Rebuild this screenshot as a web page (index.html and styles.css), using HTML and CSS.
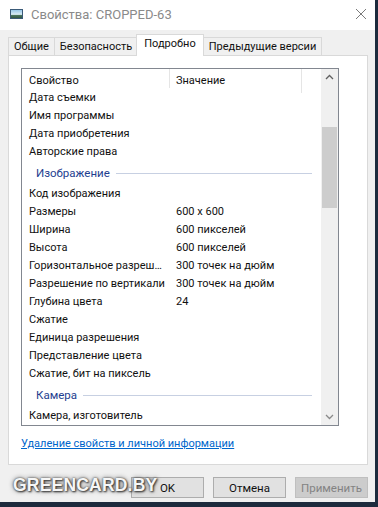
FILE: index.html
```html
<!DOCTYPE html>
<html lang="ru">
<head>
  <meta charset="UTF-8">
  <meta name="viewport" content="width=device-width, initial-scale=1.0">
  <title>Свойства: CROPPED-63</title>
  <link rel="stylesheet" href="styles.css">
</head>
<body>
  <div class="window">
    <div class="titlebar">
      <svg class="app-icon" width="13" height="10" viewBox="0 0 13 10">
        <defs>
          <linearGradient id="sky" x1="0" y1="0" x2="0" y2="1">
            <stop offset="0" stop-color="#8fc3e6"/>
            <stop offset="0.55" stop-color="#d9ecf6"/>
            <stop offset="0.6" stop-color="#4d7a63"/>
            <stop offset="1" stop-color="#2d4f3c"/>
          </linearGradient>
        </defs>
        <rect x="0.5" y="0.5" width="12" height="9" fill="url(#sky)" stroke="#3a5a78"/>
      </svg>
      <span class="title">Свойства: CROPPED-63</span>
      <svg class="close" width="12" height="12" viewBox="0 0 12 12">
        <path d="M1 1 L11 11 M11 1 L1 11" stroke="#7a7a7a" stroke-width="1"/>
      </svg>
    </div>

    <div class="tabs">
      <span class="tab">Общие</span>
      <span class="tab">Безопасность</span>
      <span class="tab active">Подробно</span>
      <span class="tab">Предыдущие версии</span>
    </div>

    <div class="panel">
      <div class="listbox">
        <div class="list">
          <div class="list-head">
            <span class="col-name">Свойство</span>
            <span class="col-value">Значение</span>
            <span class="col-rest"></span>
          </div>
          <div class="row"><span class="col-name">Дата съемки</span></div>
          <div class="row"><span class="col-name">Имя программы</span></div>
          <div class="row"><span class="col-name">Дата приобретения</span></div>
          <div class="row"><span class="col-name">Авторские права</span></div>
          <div class="group"><span>Изображение</span></div>
          <div class="row"><span class="col-name">Код изображения</span></div>
          <div class="row"><span class="col-name">Размеры</span><span class="col-value">600 x 600</span></div>
          <div class="row"><span class="col-name">Ширина</span><span class="col-value">600 пикселей</span></div>
          <div class="row"><span class="col-name">Высота</span><span class="col-value">600 пикселей</span></div>
          <div class="row"><span class="col-name">Горизонтальное разрешение</span><span class="col-value">300 точек на дюйм</span></div>
          <div class="row"><span class="col-name">Разрешение по вертикали</span><span class="col-value">300 точек на дюйм</span></div>
          <div class="row"><span class="col-name">Глубина цвета</span><span class="col-value">24</span></div>
          <div class="row"><span class="col-name">Сжатие</span></div>
          <div class="row"><span class="col-name">Единица разрешения</span></div>
          <div class="row"><span class="col-name">Представление цвета</span></div>
          <div class="row"><span class="col-name">Сжатие, бит на пиксель</span></div>
          <div class="group"><span>Камера</span></div>
          <div class="row"><span class="col-name">Камера, изготовитель</span></div>
        </div>
        <div class="scrollbar">
          <svg class="arrow" width="17" height="17" viewBox="0 0 17 17">
            <path d="M5 10 L8.5 6.5 L12 10" fill="none" stroke="#606060" stroke-width="1.3"/>
          </svg>
          <div class="track">
            <div class="thumb"></div>
          </div>
          <svg class="arrow" width="17" height="17" viewBox="0 0 17 17">
            <path d="M5 7 L8.5 10.5 L12 7" fill="none" stroke="#8a8a8a" stroke-width="1.3"/>
          </svg>
        </div>
      </div>
      <a href="#" class="link">Удаление свойств и личной информации</a>
    </div>

    <div class="buttons">
      <button type="button" class="btn">OK</button>
      <button type="button" class="btn">Отмена</button>
      <button type="button" class="btn" disabled>Применить</button>
    </div>

    <div class="watermark">GREENCARD.BY</div>
  </div>
</body>
</html>
```

FILE: styles.css
```css
* {
  margin: 0;
  padding: 0;
  box-sizing: border-box;
}
body {
  width: 378px;
  height: 507px;
  overflow: hidden;
  background: #1d2b3d;
  font-family: Roboto, "Liberation Sans", sans-serif;
  font-size: 11px;
  color: #111;
}
.window {
  position: relative;
  width: 375px;
  height: 502px;
  background: #f0f0f0;
  display: flex;
  flex-direction: column;
}
.titlebar {
  height: 30px;
  background: #fff;
  display: flex;
  align-items: center;
  padding: 0 8px 2px 10px;
}
.title {
  margin-left: 8px;
  color: #8a8a8a;
  font-size: 13px;
  flex: 1;
}
.tabs {
  margin-top: 4px;
  height: 21px;
  padding-left: 8px;
  display: flex;
  align-items: flex-end;
  position: relative;
  z-index: 1;
}
.tab {
  height: 18px;
  line-height: 17px;
  padding: 0 5px;
  border: 1px solid #d9d9d9;
  border-bottom: none;
  border-left: none;
  background: #f0f0f0;
}
.tab:first-child {
  border-left: 1px solid #d9d9d9;
}
.tab.active {
  height: 22px;
  line-height: 18px;
  margin: 0 -1px -1px -2px;
  padding: 0 7px;
  border-left: 1px solid #d9d9d9;
  background: #fff;
  position: relative;
}
.tab.active + .tab {
  margin-left: 1px;
}
.panel {
  margin: 0 7px 0 8px;
  height: 410px;
  border: 1px solid #d9d9d9;
  background: #fff;
  padding: 12px 0 0 12px;
  display: flex;
  flex-direction: column;
}
.listbox {
  width: 318px;
  height: 358px;
  border: 1px solid #828790;
  display: flex;
  overflow: hidden;
}
.list {
  flex: 1;
  overflow: hidden;
}
.list-head {
  height: 19px;
  display: flex;
  align-items: center;
  position: relative;
}
.list-head span {
  position: relative;
  height: 19px;
  line-height: 24px;
}
.list-head .col-value::after,
.list-head .col-name::after {
  content: "";
  position: absolute;
  right: 0;
  top: 0;
  width: 1px;
  height: 24px;
  background: #e5e5e5;
}
.col-name {
  width: 148px;
  flex-shrink: 0;
  padding-left: 7px;
  white-space: nowrap;
  overflow: hidden;
  text-overflow: ellipsis;
}
.col-value {
  width: 132px;
  flex-shrink: 0;
  padding-left: 6px;
  white-space: nowrap;
}
.row {
  height: 18px;
  line-height: 19px;
  display: flex;
}
.row .col-name {
  padding-right: 4px;
}
.group {
  height: 24px;
  display: flex;
  align-items: center;
  padding: 1px 0 0 14px;
  color: #1e3e8f;
  font-size: 11.5px;
}
.group::after {
  content: "";
  flex: 1;
  height: 1px;
  margin: 1px 9px 0 6px;
  background: #c7d0e2;
}
.scrollbar {
  width: 17px;
  background: #f0f0f0;
  display: flex;
  flex-direction: column;
}
.arrow {
  display: block;
  flex-shrink: 0;
}
.track {
  flex: 1;
  padding: 41px 1px 0;
}
.thumb {
  height: 81px;
  background: #cdcdcd;
}
.link {
  margin-top: 10px;
  align-self: flex-start;
  color: #0066cc;
  line-height: 16px;
  text-decoration: underline;
}
.buttons {
  margin-top: 12px;
  padding-right: 7px;
  display: flex;
  justify-content: flex-end;
  gap: 9px;
}
.btn {
  width: 73px;
  height: 21px;
  font-family: inherit;
  font-size: 11.5px;
  color: #111;
  background: #e1e1e1;
  border: 1px solid #adadad;
}
.btn:disabled {
  background: #cccccc;
  border-color: #bfbfbf;
  color: #838383;
}
.watermark {
  position: absolute;
  left: 13px;
  top: 475px;
  font-family: "Liberation Sans", Arial, sans-serif;
  font-weight: bold;
  font-size: 17.5px;
  letter-spacing: 0.2px;
  color: #f6f6f6;
  text-shadow: 0 0 2px #444, 1px 1px 2px #333, 0 0 5px #666;
}
```
